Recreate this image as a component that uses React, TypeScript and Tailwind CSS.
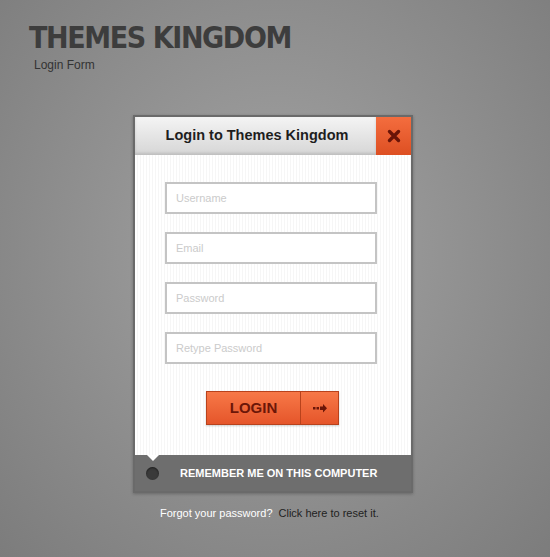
const inputs = ["Username", "Email", "Password", "Retype Password"];

export default function App() {
  return (
    <div className="h-[557px] w-full overflow-hidden bg-[radial-gradient(ellipse_at_50%_45%,#a4a4a4_0%,#8e8e8e_55%,#7c7c7c_100%)] font-['Liberation_Sans',Arial,sans-serif]">
      {/* Page title */}
      <div className="pl-[29px] pt-[20px]">
        <h1 className="font-['DejaVu_Sans_Condensed','DejaVu_Sans',sans-serif] text-[30px] font-bold leading-[36px] tracking-[-1.4px] text-[#3d3d3d]">
          THEMES KINGDOM
        </h1>
        <p className="pl-[5px] pt-[2px] text-[12px] leading-[14px] text-[#333]">Login Form</p>
      </div>

      {/* Login box */}
      <div className="ml-[133px] mt-[43px] w-[280px] border-[2px] border-[#6a6a6a] bg-[#6a6a6a] shadow-[0_1px_3px_rgba(0,0,0,0.25)]">
        <div className="flex h-[38px]">
          <div className="flex flex-1 items-center justify-center bg-gradient-to-b from-[#f4f4f4] to-[#d6d6d6] pl-[3px] shadow-[inset_0_-2px_3px_rgba(0,0,0,0.12)]">
            <span className="text-[14.5px] font-bold text-[#1e1e1e]">Login to Themes Kingdom</span>
          </div>
          <button className="flex w-[35px] items-center justify-center bg-gradient-to-b from-[#f46d3e] to-[#dd4f22]">
            <svg width="14" height="14" viewBox="0 0 14 14">
              <path d="M2.5 2.5 L11.5 11.5 M11.5 2.5 L2.5 11.5" stroke="#6a1408" strokeWidth="3.4" strokeLinecap="round" />
            </svg>
          </button>
        </div>

        <div className="flex flex-col bg-white bg-[repeating-linear-gradient(90deg,#ffffff_0px,#ffffff_2px,#f6f6f6_2px,#f6f6f6_3px)] pb-[30px] pt-[27px]">
          <div className="ml-[30px] flex flex-col gap-[18px]">
            {inputs.map((name) => (
              <input
                key={name}
                type={name.includes("Password") ? "password" : "text"}
                placeholder={name}
                className="h-[32px] w-[212px] border-[2px] border-[#c4c4c4] bg-white px-[9px] text-[11px] text-[#555] outline-none placeholder:text-[#cbcbcb]"
              />
            ))}
          </div>

          <div className="ml-[71px] mt-[27px] flex h-[34px] w-[133px] border border-[#b8421c] bg-gradient-to-b from-[#f77847] to-[#e5552a] shadow-[0_1px_2px_rgba(0,0,0,0.2)]">
            <button className="flex flex-1 items-center justify-center border-r border-[#b8421c] text-[15px] font-bold text-[#6b1608]">
              LOGIN
            </button>
            <button className="flex w-[37px] items-center justify-center">
              <svg width="16" height="10" viewBox="0 0 16 10">
                <rect x="1" y="4" width="2.5" height="2.5" fill="#6b1608" />
                <rect x="4.5" y="4" width="2.5" height="2.5" fill="#6b1608" />
                <path d="M8 3.5 H11 V1 L15 5.2 L11 9.4 V7 H8 Z" fill="#6b1608" />
              </svg>
            </button>
          </div>
        </div>

        <div className="relative flex h-[36px] items-center bg-[#6e6e6e]">
          <span className="absolute left-[12px] top-0 h-0 w-0 border-x-[6px] border-t-[6px] border-x-transparent border-t-white" />
          <span className="ml-[11px] h-[13px] w-[13px] rounded-full bg-[#3a3a3a] shadow-[inset_0_1px_2px_rgba(0,0,0,0.5)]" />
          <span className="ml-[21px] text-[11px] font-bold text-white">REMEMBER ME ON THIS COMPUTER</span>
        </div>
      </div>

      <p className="mt-[12px] pl-[160px] text-[11px]">
        <span className="text-white">Forgot your password?</span>
        <span className="ml-[6px] text-[#222]">Click here to reset it.</span>
      </p>
    </div>
  );
}
